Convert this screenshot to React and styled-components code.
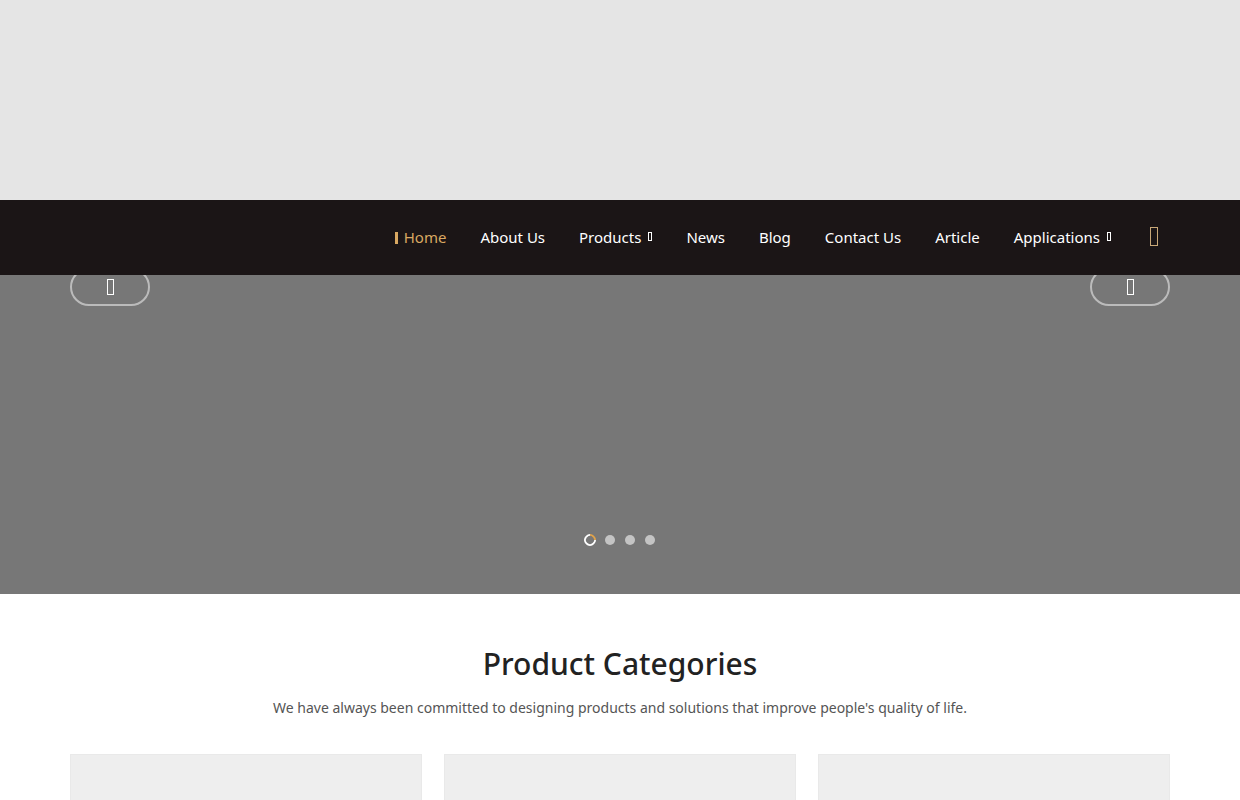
import styled, { createGlobalStyle } from "styled-components";

const GlobalStyle = createGlobalStyle`
	body {
		margin: 0;
		background: #fff;
		font-family: "Noto Sans", "Open Sans", sans-serif;
	}
	* { box-sizing: border-box; }
`;

const TopBand = styled.div`
	height: 200px;
	background-color: #e5e5e5;
`;

const Hero = styled.section`
	position: relative;
	height: 394px;
	background-color: #777777;
`;

const NavBar = styled.nav`
	position: absolute;
	top: 0;
	left: 0;
	right: 0;
	height: 75px;
	background-color: #1b1516;
	z-index: 2;
`;

const NavInner = styled.div`
	width: 1100px;
	height: 100%;
	margin: 0 auto;
	padding-bottom: 2px;
	display: flex;
	align-items: center;
	justify-content: flex-end;
`;

const NavItem = styled.a`
	display: flex;
	align-items: center;
	gap: 7px;
	padding: 0 17px 0 ${(p) => (p.$active ? 14 : 17)}px;
	font-size: 15px;
	color: ${(p) => (p.$active ? "#d9a862" : "#ffffff")};
	text-decoration: none;
	position: relative;

	&::before {
		content: "";
		display: ${(p) => (p.$active ? "block" : "none")};
		position: absolute;
		left: 5px;
		top: 50%;
		width: 3px;
		height: 12px;
		margin-top: -5px;
		background-color: #d9a862;
	}
`;

/* missing-glyph box, as drawn by the icon font fallback */
const Tofu = styled.span`
	display: inline-block;
	width: ${(p) => p.$w}px;
	height: ${(p) => p.$h}px;
	border: 1px solid ${(p) => p.$color || "#ffffff"};
`;

const SearchButton = styled.span`
	display: flex;
	align-items: center;
	padding: 0 12px 0 22px;
`;

const Arrow = styled.button`
	position: absolute;
	top: 68px;
	${(p) => (p.$side === "left" ? "left: 70px;" : "right: 70px;")}
	width: 80px;
	height: 38px;
	border-radius: 19px;
	border: 2px solid rgba(255, 255, 255, 0.5);
	background: transparent;
	display: flex;
	align-items: center;
	justify-content: center;
	padding: 0;
	z-index: 1;
`;

const Dots = styled.div`
	position: absolute;
	bottom: 48px;
	left: 0;
	right: 0;
	display: flex;
	justify-content: center;
	align-items: center;
	gap: 10px;
`;

const Dot = styled.span`
	width: ${(p) => (p.$active ? 12 : 10)}px;
	height: ${(p) => (p.$active ? 12 : 10)}px;
	margin: 0 ${(p) => (p.$active ? -1 : 0)}px;
	border-radius: 50%;
	background-color: ${(p) => (p.$active ? "transparent" : "#c4c4c4")};
	border: ${(p) => (p.$active ? "2px solid #ffffff" : "none")};
	border-top-color: ${(p) => (p.$active ? "#e0a24a" : "transparent")};
	transform: rotate(45deg);
`;

const Section = styled.section`
	width: 1100px;
	margin: 0 auto;
	padding-top: 50px;
	text-align: center;
`;

const Title = styled.h2`
	margin: 0;
	font-size: 30px;
	font-weight: 500;
	line-height: 40px;
	color: #222222;
`;

const Subtitle = styled.p`
	margin: 14px 0 0;
	font-size: 14px;
	line-height: 20px;
	color: #555555;
`;

const Cards = styled.div`
	margin-top: 36px;
	display: grid;
	grid-template-columns: repeat(3, 1fr);
	gap: 22px;
`;

const Card = styled.div`
	height: 200px;
	background-color: #eeeeee;
	border: 1px solid #e9e9e9;
`;

const navItems = [
	{ text: "Home", active: true },
	{ text: "About Us" },
	{ text: "Products", drop: true },
	{ text: "News" },
	{ text: "Blog" },
	{ text: "Contact Us" },
	{ text: "Article" },
	{ text: "Applications", drop: true },
];

export default function App() {
	return (
		<>
			<GlobalStyle />
			<TopBand />
			<Hero>
				<NavBar>
					<NavInner>
						{navItems.map((item) => (
							<NavItem key={item.text} $active={item.active}>
								{item.text}
								{item.drop && <Tofu $w={4} $h={9} />}
							</NavItem>
						))}
						<SearchButton>
							<Tofu $w={8} $h={19} $color="#c9a878" />
						</SearchButton>
					</NavInner>
				</NavBar>
				<Arrow $side="left">
					<Tofu $w={7} $h={16} />
				</Arrow>
				<Arrow $side="right">
					<Tofu $w={7} $h={16} />
				</Arrow>
				<Dots>
					<Dot $active />
					<Dot />
					<Dot />
					<Dot />
				</Dots>
			</Hero>
			<Section>
				<Title>Product Categories</Title>
				<Subtitle>
					We have always been committed to designing products and solutions that improve people's quality of life.
				</Subtitle>
				<Cards>
					<Card />
					<Card />
					<Card />
				</Cards>
			</Section>
		</>
	);
}
